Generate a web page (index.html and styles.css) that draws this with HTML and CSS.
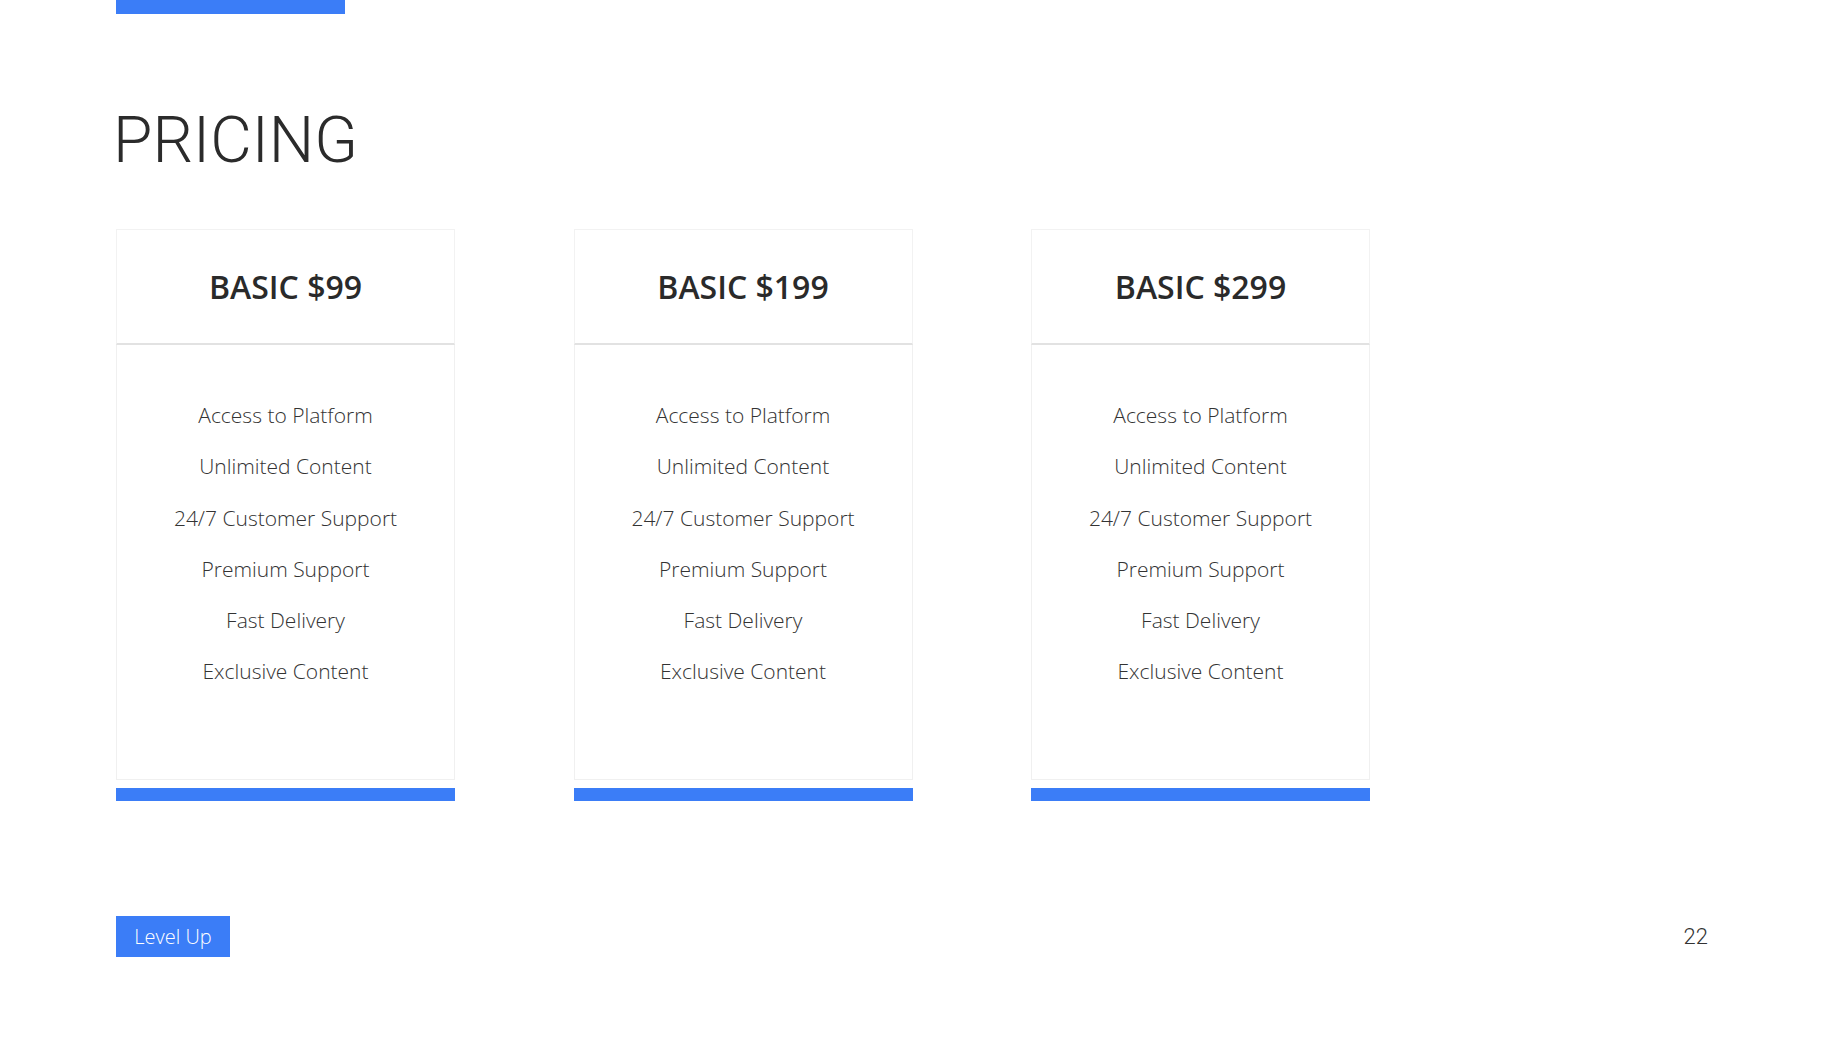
FILE: index.html
```html
<!DOCTYPE html>
<html>
<head>
<meta charset="utf-8">
<link rel="stylesheet" href="styles.css">
</head>
<body>
<div class="slide">
  <div class="topbar"></div>
  <h1 class="title">PRICING</h1>
  <div class="cards">
    <div class="card">
      <div class="card-head">BASIC $99</div>
      <ul class="card-body">
        <li>Access to Platform</li>
        <li>Unlimited Content</li>
        <li>24/7 Customer Support</li>
        <li>Premium Support</li>
        <li>Fast Delivery</li>
        <li>Exclusive Content</li>
      </ul>
      <div class="card-bar"></div>
    </div>
    <div class="card">
      <div class="card-head">BASIC $199</div>
      <ul class="card-body">
        <li>Access to Platform</li>
        <li>Unlimited Content</li>
        <li>24/7 Customer Support</li>
        <li>Premium Support</li>
        <li>Fast Delivery</li>
        <li>Exclusive Content</li>
      </ul>
      <div class="card-bar"></div>
    </div>
    <div class="card">
      <div class="card-head">BASIC $299</div>
      <ul class="card-body">
        <li>Access to Platform</li>
        <li>Unlimited Content</li>
        <li>24/7 Customer Support</li>
        <li>Premium Support</li>
        <li>Fast Delivery</li>
        <li>Exclusive Content</li>
      </ul>
      <div class="card-bar"></div>
    </div>
  </div>
  <div class="footer">
    <div class="badge">Level Up</div>
    <div class="page-num">22</div>
  </div>
</div>
</body>
</html>
```

FILE: styles.css
```css
* { box-sizing: border-box; }
html, body {
  margin: 0;
  padding: 0;
  background: #ffffff;
}
.slide {
  width: 1843px;
  height: 1037px;
  padding: 0 135px 0 116px;
  overflow: hidden;
}
.topbar {
  width: 229px;
  height: 14px;
  background: #3b7df7;
}
.title {
  margin: 95px 0 0 -3px;
  font-family: Roboto, "Liberation Sans", sans-serif;
  font-weight: 300;
  font-size: 64px;
  line-height: 64px;
  color: #2b2b2b;
}
.cards {
  display: flex;
  gap: 118.5px;
  margin-top: 56px;
}
.card {
  width: 339px;
  display: flex;
  flex-direction: column;
}
.card-head {
  height: 116px;
  border: 1px solid #f2f2f2;
  border-bottom: 2px solid #e2e2e2;
  display: flex;
  align-items: center;
  justify-content: center;
  font-family: "Open Sans", sans-serif;
  font-weight: 600;
  font-size: 32px;
  color: #2a2a2a;
  padding-bottom: 1px;
}
.card-body {
  list-style: none;
  margin: 0;
  height: 435px;
  padding: 45px 0 0 0;
  border: 1px solid #f0f0f0;
  border-top: none;
  text-align: center;
  font-family: "Open Sans", sans-serif;
  font-weight: 300;
  font-size: 21px;
  line-height: 51.3px;
  color: #333333;
}
.card-bar {
  margin-top: 8px;
  height: 13px;
  background: #3b7df7;
}
.footer {
  margin-top: 115px;
  display: flex;
  justify-content: space-between;
  align-items: center;
}
.badge {
  width: 114px;
  height: 41px;
  background: #3b7df7;
  color: #ffffff;
  font-family: "Open Sans", sans-serif;
  font-weight: 300;
  font-size: 20px;
  display: flex;
  align-items: center;
  justify-content: center;
}
.page-num {
  font-family: Roboto, "Liberation Sans", sans-serif;
  font-weight: 300;
  font-size: 22px;
  color: #333333;
}
```
